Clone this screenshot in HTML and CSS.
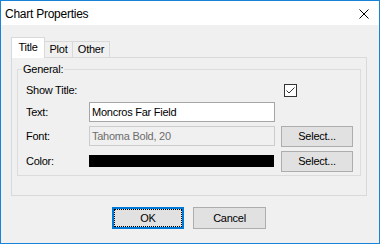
FILE: index.html
```html
<!DOCTYPE html>
<html lang="en">

<head>
    <meta charset="UTF-8">
    <title>Chart Properties</title>
    <link rel="stylesheet" href="styles.css">
</head>

<body>

    <div class="window">
        <div class="titlebar">
            <span class="caption">Chart Properties</span>
            <svg class="close" width="10" height="10" viewBox="0 0 10 10">
                <path d="M0.5 0.5 L9.5 9.5 M9.5 0.5 L0.5 9.5" stroke="#000" stroke-width="1" fill="none" />
            </svg>
        </div>

        <div class="content">
            <div class="tabs">
                <div class="tab tab-title active">Title</div>
                <div class="tab tab-plot">Plot</div>
                <div class="tab tab-other">Other</div>
            </div>

            <div class="panel">
                <fieldset class="group">
                    <legend>General:</legend>
                    <div class="rows">
                        <div class="label">Show Title:</div>
                        <div></div>
                        <div class="check-cell">
                            <span class="checkbox">
                                <svg width="11" height="11" viewBox="0 0 11 11">
                                    <polyline points="1.5,5.5 4,8 9.5,2.5" stroke="#333" stroke-width="1" fill="none" />
                                </svg>
                            </span>
                        </div>

                        <div class="label">Text:</div>
                        <div class="textbox">Moncros Far Field</div>
                        <div></div>

                        <div class="label">Font:</div>
                        <div class="textbox disabled">Tahoma Bold, 20</div>
                        <button class="btn">Select...</button>

                        <div class="label">Color:</div>
                        <div class="swatch"></div>
                        <button class="btn">Select...</button>
                    </div>
                </fieldset>
            </div>

            <div class="actions">
                <button class="btn btn-ok">OK</button>
                <button class="btn btn-cancel">Cancel</button>
            </div>
        </div>
    </div>

</body>

</html>
```

FILE: styles.css
```css
html, body {
    margin: 0;
    padding: 0;
    background-color: #f0f0f0;
}

.window {
    width: 380px;
    height: 244px;
    box-sizing: border-box;
    border: 1px solid #1883d7;
    display: flex;
    flex-direction: column;
    font-family: 'Liberation Sans', Arial, sans-serif;
    font-size: 11px;
    letter-spacing: -0.25px;
    color: #000;
}

.titlebar {
    height: 24px;
    background-color: #fff;
    display: flex;
    align-items: center;
    justify-content: space-between;
    padding-left: 4px;
    padding-right: 10px;
}

.caption {
    font-size: 12px;
    letter-spacing: -0.25px;
    margin-top: 1px;
}

.close {
    display: block;
    margin-top: 1px;
}

.content {
    flex: 1;
    background-color: #f0f0f0;
    padding: 12px 12px 0 10px;
}

.tabs {
    display: flex;
    align-items: flex-end;
    height: 20px;
}

.tab {
    box-sizing: border-box;
    height: 16px;
    border: 1px solid #d9d9d9;
    border-bottom: none;
    background-color: #f0f0f0;
    text-align: center;
    line-height: 15px;
}

.tab.active {
    height: 21px;
    margin-bottom: -1px;
    background-color: #fff;
    line-height: 19px;
    position: relative;
    z-index: 1;
}

.tab-title {
    width: 34px;
}

.tab-plot {
    width: 29px;
    margin-left: -1px;
}

.tab-other {
    width: 38px;
    margin-left: -1px;
}

.panel {
    box-sizing: border-box;
    height: 139px;
    border: 1px solid #d9d9d9;
    padding: 5px 5px 0 5px;
}

.group {
    margin: 0;
    padding: 6px 7px 3px 8px;
    border: 1px solid #dcdcdc;
}

.group legend {
    margin-left: -4px;
    padding: 0 1px;
    line-height: 13px;
}

.rows {
    display: grid;
    grid-template-columns: 57px 186px 72px;
    grid-template-rows: 16px 20px 20px 22px;
    column-gap: 6px;
    row-gap: 4px;
    align-items: center;
}

.check-cell {
    padding-left: 3px;
}

.checkbox {
    display: block;
    width: 13px;
    height: 13px;
    box-sizing: border-box;
    border: 1px solid #333;
    background-color: #fff;
}

.checkbox svg {
    display: block;
}

.textbox {
    box-sizing: border-box;
    height: 20px;
    border: 1px solid #a6a6a6;
    background-color: #fff;
    padding-left: 2px;
    line-height: 18px;
}

.textbox.disabled {
    background-color: #f0f0f0;
    border-color: #cccccc;
    color: #6d6d6d;
}

.swatch {
    height: 12px;
    width: 185px;
    background-color: #000;
}

.btn {
    box-sizing: border-box;
    height: 21px;
    margin: 0;
    padding: 0;
    border: 1px solid #adadad;
    background-color: #e1e1e1;
    font-family: inherit;
    font-size: inherit;
    letter-spacing: inherit;
    color: #000;
}

.actions {
    display: flex;
    justify-content: center;
    gap: 9px;
    margin-top: 11px;
}

.actions .btn {
    height: 22px;
}

.btn-ok {
    width: 72px;
    border-color: #0078d7;
    box-shadow: inset 0 0 0 1px #0078d7;
    outline: 1px dotted #000;
    outline-offset: -3px;
}

.btn-cancel {
    width: 73px;
}
```
